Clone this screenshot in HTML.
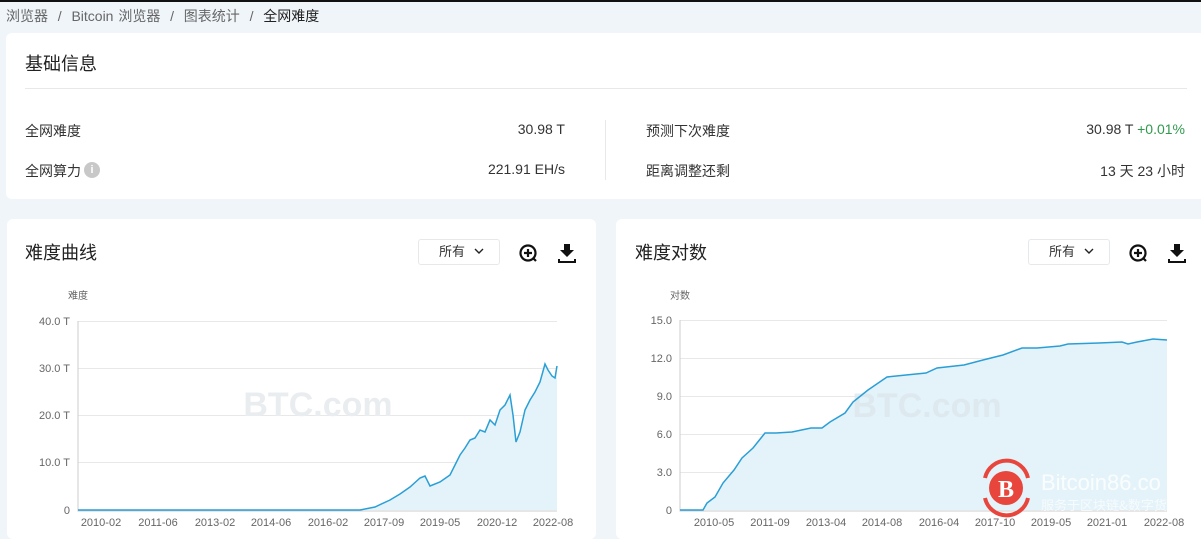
<!DOCTYPE html>
<html><head><meta charset="utf-8"><style>
*{margin:0;padding:0;box-sizing:border-box}
body{width:1201px;height:528px;overflow:hidden;background:#f0f5fa;font-family:"Liberation Sans","Noto Sans CJK SC",sans-serif;color:#333;position:relative}
.a{position:absolute;white-space:nowrap}
.card{position:absolute;background:#fff;border-radius:6px}
.sm{font-size:14px}
.btn{position:absolute;border:1px solid #e6e8eb;border-radius:3px;width:82px;height:26px;font-size:13px;text-align:center;line-height:24px;background:#fff}
.ax{font-size:11px;fill:#666;font-family:"Liberation Sans","Noto Sans CJK SC",sans-serif}
</style></head><body>
<div class="a" style="left:0;top:0;width:1201px;height:2px;background:#111"></div>
<div class="a" style="left:6px;top:6px;font-size:14px;color:#666;word-spacing:1px">浏览器 &nbsp;/&nbsp; Bitcoin 浏览器 &nbsp;/&nbsp; 图表统计 &nbsp;/&nbsp; <span style="color:#222">全网难度</span></div>

<div class="card" style="left:6px;top:33px;width:1210px;height:166px"></div>
<div class="a" style="left:25px;top:50px;font-size:18px;color:#222">基础信息</div>
<div class="a" style="left:25px;top:88px;width:1162px;height:1px;background:#e8e8e8"></div>
<div class="a sm" style="left:25px;top:121px">全网难度</div>
<div class="a sm" style="left:25px;top:161px">全网算力</div>
<div class="a" style="left:84px;top:162px;width:16px;height:16px;border-radius:50%;background:#c8c8c8;color:#fff;font-size:11px;font-weight:bold;text-align:center;line-height:16px">i</div>
<div class="a sm" style="right:636px;top:121px">30.98 T</div>
<div class="a sm" style="right:636px;top:161px">221.91 EH/s</div>
<div class="a" style="left:605px;top:120px;width:1px;height:60px;background:#e8e8e8"></div>
<div class="a sm" style="left:646px;top:121px">预测下次难度</div>
<div class="a sm" style="left:646px;top:161px">距离调整还剩</div>
<div class="a sm" style="right:16px;top:121px">30.98 T <span style="color:#2f9a4e">+0.01%</span></div>
<div class="a sm" style="right:16px;top:161px">13 天 23 小时</div>

<div class="card" style="left:7px;top:219px;width:589px;height:320px"></div>
<div class="card" style="left:616px;top:219px;width:600px;height:320px"></div>
<div class="a" style="left:25px;top:239px;font-size:18px;color:#222">难度曲线</div>
<div class="a" style="left:635px;top:239px;font-size:18px;color:#222">难度对数</div>
<div class="btn" style="left:418px;top:239px;text-align:left;padding-left:20px">所有</div>
<div class="btn" style="left:1028px;top:239px;text-align:left;padding-left:20px">所有</div>

<svg class="a" style="left:0;top:0" width="1201" height="528">
<g fill="none" stroke="#222" stroke-width="1.4"><path d="M475 249l4 4 4-4M1085 249l4 4 4-4"/></g>
<g fill="none" stroke="#111" stroke-width="2.2">
<circle cx="528" cy="253" r="7.5"/><path d="M528 249v8M524 253h8M533 258l3 3"/>
<circle cx="1138" cy="253" r="7.5"/><path d="M1138 249v8M1134 253h8M1143 258l3 3"/>
</g>
<g fill="#111"><path d="M564 244h6v6h4l-7 7-7-7h4zM558 259h2v2h14v-2h2v4h-18z"/>
<path d="M1174 244h6v6h4l-7 7-7-7h4zM1168 259h2v2h14v-2h2v4h-18z"/></g>

<g stroke="#e8e8e8" stroke-width="1"><path d="M78 321.5H557M78 368.5H557M78 415.5H557M78 462.5H557"/></g>
<path d="M78 321V511H557" stroke="#ccc" fill="none"/>
<g class="ax" text-anchor="end"><text x="70" y="325">40.0 T</text><text x="70" y="372">30.0 T</text><text x="70" y="419">20.0 T</text><text x="70" y="466">10.0 T</text><text x="70" y="514">0</text></g>
<text class="ax" x="68" y="299" style="font-size:10px">难度</text>
<g class="ax" text-anchor="middle"><text x="101" y="526">2010-02</text><text x="158" y="526">2011-06</text><text x="215" y="526">2013-02</text><text x="271" y="526">2014-06</text><text x="328" y="526">2016-02</text><text x="384" y="526">2017-09</text><text x="440" y="526">2019-05</text><text x="497" y="526">2020-12</text><text x="553" y="526">2022-08</text></g>
<text x="318" y="416" text-anchor="middle" style="font:bold 34px 'Liberation Sans';fill:#eaedf0">BTC.com</text>
<path d="M78 510H360L375 507 390 500 400 494 410 487 420 478 425 476 430 486 440 482 450 475 460 455 465 448 470 440 475 438 480 430 485 432 490 420 495 425 500 410 505 405 510 395 513 415 516 442 520 432 525 410 530 400 535 392 540 382 545 364 548 370 552 376 555 378 557 366V510Z" fill="#e4f3f9" stroke="none"/>
<path d="M78 510H360L375 507 390 500 400 494 410 487 420 478 425 476 430 486 440 482 450 475 460 455 465 448 470 440 475 438 480 430 485 432 490 420 495 425 500 410 505 405 510 395 513 415 516 442 520 432 525 410 530 400 535 392 540 382 545 364 548 370 552 376 555 378 557 366" fill="none" stroke="#2a9fd6" stroke-width="1.5"/>

<g stroke="#e8e8e8" stroke-width="1"><path d="M680 320.5H1167M680 358.5H1167M680 396.5H1167M680 434.5H1167M680 472.5H1167"/></g>
<path d="M680 320V511H1167" stroke="#ccc" fill="none"/>
<g class="ax" text-anchor="end"><text x="672" y="324">15.0</text><text x="672" y="362">12.0</text><text x="672" y="400">9.0</text><text x="672" y="438">6.0</text><text x="672" y="476">3.0</text><text x="672" y="514">0</text></g>
<text class="ax" x="670" y="299" style="font-size:10px">对数</text>
<g class="ax" text-anchor="middle"><text x="714" y="526">2010-05</text><text x="770" y="526">2011-09</text><text x="826" y="526">2013-04</text><text x="882" y="526">2014-08</text><text x="939" y="526">2016-04</text><text x="995" y="526">2017-10</text><text x="1051" y="526">2019-05</text><text x="1107" y="526">2021-01</text><text x="1164" y="526">2022-08</text></g>
<path d="M680 510H703L707 503 715 497 723 483 734 470 742 458 753 448 765 433 776 433 792 432 811 428 822 428 830 422 845 413 853 402 868 390 887 377 906 375 926 373 937 368 964 365 983 360 1003 355 1022 348 1037 348 1060 346 1068 344 1099 343 1122 342 1128 344 1137 342 1153 339 1167 340V510Z" fill="#e4f3f9"/>
<text x="927" y="417" text-anchor="middle" style="font:bold 34px 'Liberation Sans';fill:#dce7ec;opacity:.8">BTC.com</text>
<path d="M680 510H703L707 503 715 497 723 483 734 470 742 458 753 448 765 433 776 433 792 432 811 428 822 428 830 422 845 413 853 402 868 390 887 377 906 375 926 373 937 368 964 365 983 360 1003 355 1022 348 1037 348 1060 346 1068 344 1099 343 1122 342 1128 344 1137 342 1153 339 1167 340" fill="none" stroke="#2a9fd6" stroke-width="1.5"/>
<path d="M985 478A22 22 0 0 1 1028 478M985 498A22 22 0 0 0 1028 498" stroke="#e8463c" stroke-width="4" fill="none"/>
<circle cx="1006" cy="488" r="17" fill="#e8463c"/>
<text x="1006" y="497" text-anchor="middle" style="font:bold 24px 'Liberation Serif';fill:#fff">B</text>
<text x="1041" y="490" style="font:22px 'Liberation Sans';fill:#fff;opacity:.85">Bitcoin86.co</text>
<text x="1041" y="510" style="font:13px 'Noto Sans CJK SC';fill:#fff;opacity:.7">服务于区块链&amp;数字货</text>
</svg>
</body></html>
